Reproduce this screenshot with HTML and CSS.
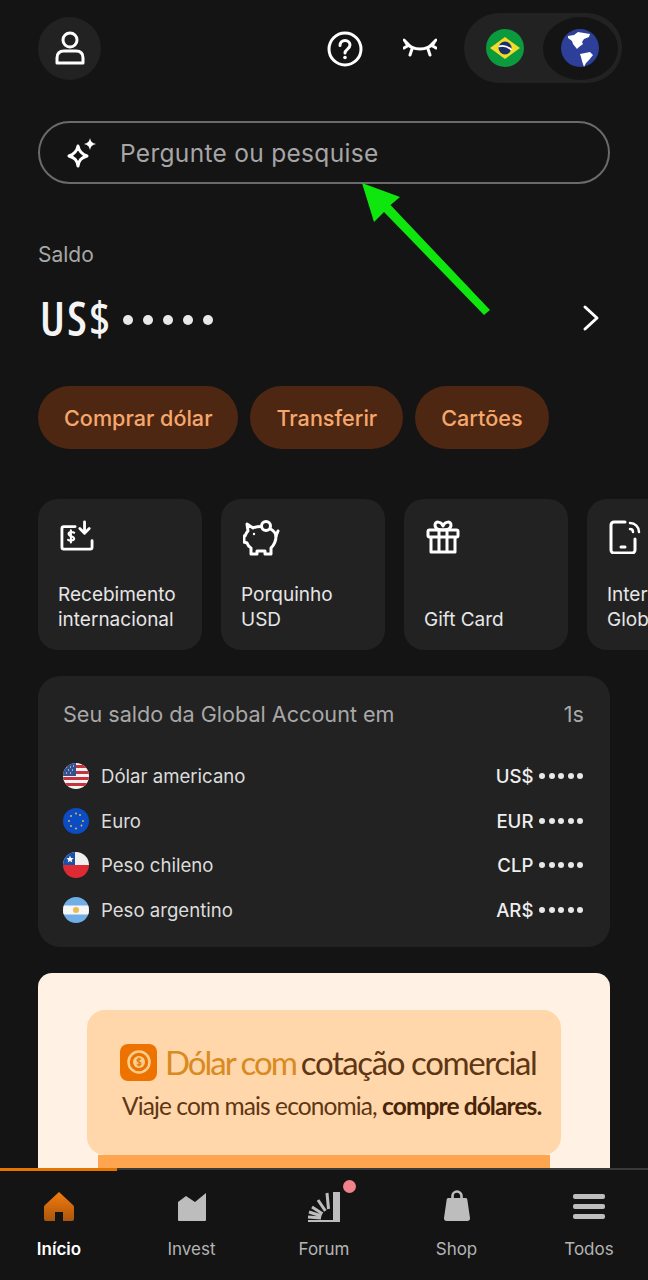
FILE: index.html
```html
<!DOCTYPE html>
<html lang="pt-BR">
<head>
    <meta charset="UTF-8">
    <meta name="viewport" content="width=device-width, initial-scale=1.0">
    <title>Início</title>
    <link rel="stylesheet" href="styles.css">
</head>
<body>
<div class="app">
    <header class="topbar">
        <div class="avatar">
            <svg width="32" height="34" viewBox="0 0 32 34" fill="none" stroke="#fff" stroke-width="3">
                <circle cx="16" cy="9" r="7"/>
                <path d="M3 32v-5c0-5 3-7 7-7h12c4 0 7 2 7 7v5z" stroke-linejoin="round"/>
            </svg>
        </div>
        <div class="topbar-right">
            <svg class="help" width="36" height="36" viewBox="0 0 36 36" fill="none" stroke="#fff">
                <circle cx="18" cy="18" r="16" stroke-width="3"/>
                <path d="M13 14.500c0-3 2.200-5 5-5s5 2 5 4.600c0 4-5 4-5 8" stroke-width="3" stroke-linecap="round"/>
                <circle cx="18" cy="26.500" r="1.800" fill="#fff" stroke="none"/>
            </svg>
            <svg class="eye" width="34" height="20" viewBox="0 0 34 20" fill="none" stroke="#fff" stroke-width="3" stroke-linecap="round">
                <path d="M3 5c7 8 21 8 28 0"/>
                <path d="M1 2l4 4M33 2l-4 4M9 11l-2 6M25 11l2 6M1 10l5-3M33 10l-5-3"/>
            </svg>
            <div class="region-toggle">
                <div class="region">
                    <svg width="38" height="38" viewBox="0 0 38 38">
                        <circle cx="19" cy="19" r="19" fill="#0b9a3e"/>
                        <path d="M19 8l15 11-15 11L4 19z" fill="#f2dc26"/>
                        <circle cx="19" cy="19" r="6.500" fill="#1b2f6b"/>
                        <path d="M12.500 17.500c5-1.500 10 .5 13 3.500" stroke="#fff" stroke-width="1.800" fill="none"/>
                    </svg>
                </div>
                <div class="region region-on">
                    <svg width="38" height="38" viewBox="0 0 38 38">
                        <circle cx="19" cy="19" r="19" fill="#2d3f99"/>
                        <path d="M7 7l6-1 4-3 6 1 6 1-1 3-5 2-2 3 1 2-4 3-2 2-4-5-1-3-4-3z" fill="#fff"/>
                        <path d="M19 25l5-1 5-1 3 3-4 5-3 3-2 4-2-6-1-4z" fill="#fff"/>
                    </svg>
                </div>
            </div>
        </div>
    </header>

    <div class="search">
        <svg width="34" height="34" viewBox="0 0 34 34" fill="none">
            <path d="M13 10c1 5 3 8 9 10-6 2-8 4-9 10-1-6-3-8-9-10 6-2 8-5 9-10z" stroke="#fff" stroke-width="3" stroke-linejoin="round"/>
            <path d="M25 2c.8 3.500 2 5 6 6-4 1-5.200 2.500-6 6-.8-3.500-2-5-6-6 4-1 5.200-2.500 6-6z" fill="#fff"/>
        </svg>
        <span>Pergunte ou pesquise</span>
    </div>

    <section class="balance">
        <div class="balance-label">Saldo</div>
        <div class="balance-row">
            <span class="balance-cur">US$</span>
            <span class="dots dots-lg"><i></i><i></i><i></i><i></i><i></i></span>
            <svg class="chevron" width="18" height="28" viewBox="0 0 18 28" fill="none" stroke="#fff" stroke-width="3" stroke-linecap="round" stroke-linejoin="round">
                <path d="M3 3l12 11L3 25"/>
            </svg>
        </div>
    </section>

    <div class="actions">
        <button class="pill">Comprar dólar</button>
        <button class="pill">Transferir</button>
        <button class="pill">Cartões</button>
    </div>

    <div class="shortcuts">
        <div class="shortcut">
            <svg width="34" height="32" viewBox="0 0 36 34" fill="none" stroke="#fff" stroke-width="3" stroke-linecap="round" stroke-linejoin="round">
                <path d="M16 7H4a2 2 0 0 0-2 2v20a2 2 0 0 0 2 2h28a2 2 0 0 0 2-2v-7"/>
                <path d="M26 2v11M21 9l5 5 5-5"/>
                <path d="M15 13.500c-1-1-5.500-1.500-6 1 0 3.500 6 2 6 5.500-.5 2.500-5 2-6.500 1M11.500 11v13" stroke-width="2.200"/>
            </svg>
            <p>Recebimento<br>internacional</p>
        </div>
        <div class="shortcut">
            <svg width="37" height="37" viewBox="0 0 37 37" fill="none" stroke="#fff" stroke-width="3" stroke-linecap="round" stroke-linejoin="round">
                <circle cx="23" cy="6" r="4.500"/>
                <path d="M18 6.500c-4 0-6 .5-8 1.500L4 4l1 7c-2 2-2 3-3 5H1v6l3 1c1 3 2 4 4 5v6h6v-3h8v3h6v-6c3-3 5-7 5-12l2-5"/>
                <path d="M27.500 9c3 1.500 5 4 5.500 7"/>
                <circle cx="11" cy="14" r="1.200" fill="#fff" stroke="none"/>
            </svg>
            <p>Porquinho<br>USD</p>
        </div>
        <div class="shortcut">
            <svg width="34" height="34" viewBox="0 0 34 34" fill="none" stroke="#fff" stroke-width="3" stroke-linejoin="round">
                <rect x="2" y="10" width="30" height="7" rx="1.500"/>
                <path d="M5 17v15h24V17M13 10v22M21 10v22"/>
                <path d="M17 10c-3 0-8-1-8-5 0-4 6-4 8 1 2-5 8-5 8-1 0 4-5 5-8 5z"/>
            </svg>
            <p class="bottom">Gift Card</p>
        </div>
        <div class="shortcut">
            <svg width="34" height="34" viewBox="0 0 34 34" fill="none" stroke="#fff" stroke-width="3" stroke-linecap="round" stroke-linejoin="round">
                <path d="M16 2H5a3 3 0 0 0-3 3v25a3 3 0 0 0 3 3h18a3 3 0 0 0 3-3V19"/>
                <path d="M12 27h4"/>
                <path d="M21 3c5 0 9 4 9 9M21 9c2 0 3 1 3 3" stroke-width="2.500"/>
            </svg>
            <p>Internet<br>Global</p>
        </div>
    </div>

    <section class="account">
        <div class="account-head">
            <span>Seu saldo da Global Account em</span>
            <span>1s</span>
        </div>
        <div class="account-row">
            <svg class="flag" viewBox="0 0 26 26">
                <rect width="26" height="26" fill="#f4f4f4"/>
                <path d="M0 2h26v3H0zM0 8h26v3H0zM0 14h26v3H0zM0 20h26v3H0z" fill="#c8323c"/>
                <rect width="13" height="13" fill="#34528f"/>
                <path d="M3 4h1M7 4h1M10 3h1M5 7h1M9 7h1M3 10h1M7 10h1" stroke="#fff" stroke-width="1.200"/>
            </svg>
            <span class="cur-name">Dólar americano</span>
            <span class="cur-val">US$ <span class="dots"><i></i><i></i><i></i><i></i><i></i></span></span>
        </div>
        <div class="account-row">
            <svg class="flag" viewBox="0 0 26 26">
                <rect width="26" height="26" fill="#0b4cc4"/>
                <g fill="#e8c93a">
                    <circle cx="13" cy="5.500" r=".9"/><circle cx="17" cy="7" r=".9"/><circle cx="20" cy="13" r=".9"/><circle cx="18.500" cy="17.500" r=".9"/>
                    <circle cx="13" cy="20.500" r=".9"/><circle cx="8" cy="18" r=".9"/><circle cx="6" cy="13" r=".9"/><circle cx="8" cy="8" r=".9"/>
                </g>
            </svg>
            <span class="cur-name">Euro</span>
            <span class="cur-val">EUR <span class="dots"><i></i><i></i><i></i><i></i><i></i></span></span>
        </div>
        <div class="account-row">
            <svg class="flag" viewBox="0 0 26 26">
                <rect width="26" height="13" fill="#f0f0f0"/>
                <rect y="13" width="26" height="13" fill="#de2a32"/>
                <rect width="12" height="13" fill="#1b4fa8"/>
                <path d="M7 3.500l1 2.600 2.700.1-2.100 1.700.7 2.600L7 9.100l-2.300 1.400.7-2.600-2.100-1.700L6 6.100z" fill="#fff"/>
            </svg>
            <span class="cur-name">Peso chileno</span>
            <span class="cur-val">CLP <span class="dots"><i></i><i></i><i></i><i></i><i></i></span></span>
        </div>
        <div class="account-row">
            <svg class="flag" viewBox="0 0 26 26">
                <rect width="26" height="26" fill="#6faee6"/>
                <rect y="8.500" width="26" height="9" fill="#f6f6f6"/>
                <circle cx="13" cy="13" r="3" fill="#e8bb55"/>
            </svg>
            <span class="cur-name">Peso argentino</span>
            <span class="cur-val">AR$ <span class="dots"><i></i><i></i><i></i><i></i><i></i></span></span>
        </div>
    </section>

    <section class="banner">
        <div class="banner-box">
            <div class="banner-title">
                <span class="banner-logo">
                    <svg width="26" height="26" viewBox="0 0 26 26" fill="none">
                        <circle cx="13" cy="13" r="10.500" stroke="#f8cf8e" stroke-width="2.500"/>
                        <circle cx="13" cy="13" r="6" fill="#f8cf8e"/>
                        <path d="M15 10.500c-1-1-4-1-4 .8 0 2 4 1.200 4 3.400 0 1.800-3 1.800-4.200.8M13 8.500v9" stroke="#e87400" stroke-width="1.200"/>
                    </svg>
                </span>
                <span class="t-orange">Dólar com</span>
                <span class="t-brown">cotação comercial</span>
            </div>
            <div class="banner-sub">Viaje com mais economia, <b>compre dólares.</b></div>
        </div>
        <div class="banner-strip"></div>
    </section>

    <nav class="tabbar">
        <div class="tab-progress"></div>
        <div class="tab tab-on">
            <svg width="32" height="32" viewBox="0 0 32 32">
                <defs>
                    <linearGradient id="homeFill" x1="0" y1="0" x2="0" y2="1">
                        <stop offset="0" stop-color="#f57c0c"/>
                        <stop offset="1" stop-color="#a9560f"/>
                    </linearGradient>
                </defs>
                <path d="M16 2L30 15c.6.6 1 1.200 1 2v12a2 2 0 0 1-2 2h-9v-9h-8v9H3a2 2 0 0 1-2-2V17c0-.8.4-1.400 1-2z" fill="url(#homeFill)"/>
            </svg>
            <span>Início</span>
        </div>
        <div class="tab">
            <svg width="32" height="32" viewBox="0 0 32 32">
                <path d="M2 12l8-6 9 6 11-9v27a1 1 0 0 1-1 1H3a1 1 0 0 1-1-1z" fill="#bdbdbd"/>
            </svg>
            <span>Invest</span>
        </div>
        <div class="tab">
            <div class="forum-icon">
                <svg width="34" height="32" viewBox="0 0 34 32" fill="none" stroke="#bdbdbd" stroke-width="3">
                    <path d="M26 2h7v30H1v-2h25z" fill="#bdbdbd" stroke="none"/>
                    <path d="M21.500 19L20 3M18.400 20.800L11 10M15.500 23.700L5 17M14.500 26L2 22M14 28L1 27"/>
                </svg>
                <i class="badge"></i>
            </div>
            <span>Forum</span>
        </div>
        <div class="tab">
            <svg width="32" height="32" viewBox="0 0 32 32">
                <path d="M11.500 9V6a4.500 4.500 0 0 1 9 0v3" fill="none" stroke="#bdbdbd" stroke-width="2.600"/>
                <path d="M7.500 8h17c1 0 1.700.6 1.800 1.500L29 28a2.500 2.500 0 0 1-2.500 3h-21A2.500 2.500 0 0 1 3 28L5.700 9.500C5.800 8.600 6.500 8 7.500 8z" fill="#bdbdbd"/>
            </svg>
            <span>Shop</span>
        </div>
        <div class="tab">
            <svg width="34" height="32" viewBox="0 0 34 32" fill="#bdbdbd">
                <rect x="1" y="4" width="32" height="5" rx="2"/>
                <rect x="1" y="14" width="32" height="5" rx="2"/>
                <rect x="1" y="24" width="32" height="5" rx="2"/>
            </svg>
            <span>Todos</span>
        </div>
    </nav>

    <!-- green arrow marked on the screenshot -->
    <svg class="mark-arrow" width="648" height="340" viewBox="0 0 648 340">
        <path d="M362 183L400 197 390.500 205 490 310 484 315 384 212 374 222z" fill="#0ee60e"/>
    </svg>
</div>
</body>
</html>
```

FILE: styles.css
```css
* {
    box-sizing: border-box;
}
body {
    margin: 0;
    background: #141414;
    font-family: Inter, "Noto Sans", sans-serif;
    color: #fff;
}
.app {
    position: relative;
    width: 648px;
    height: 1280px;
    overflow: hidden;
    background: #141414;
}
.topbar {
    display: flex;
    justify-content: space-between;
    align-items: center;
    height: 70px;
    margin: 13px 26px 0 38px;
}
.avatar {
    display: flex;
    align-items: center;
    justify-content: center;
    width: 63px;
    height: 63px;
    border-radius: 50%;
    background: #222;
}
.topbar-right {
    display: flex;
    align-items: center;
}
.help {
    margin-top: 2px;
    margin-right: 40px;
}
.eye {
    margin-right: 27px;
}
.region-toggle {
    display: flex;
    align-items: center;
    justify-content: space-between;
    width: 158px;
    height: 70px;
    padding: 0 4px 0 3px;
    border-radius: 35px;
    background: #222;
}
.region {
    display: flex;
    align-items: center;
    justify-content: center;
    width: 76px;
    height: 63px;
}
.region-on {
    border-radius: 50%;
    background: #141414;
}
.search {
    display: flex;
    align-items: center;
    gap: 21px;
    height: 63px;
    margin: 38px 38px 0;
    padding-left: 25px;
    border: 2px solid #6a6a6a;
    border-radius: 32px;
    font-size: 24.500px;
    letter-spacing: 0.3px;
    color: #a6a6a6;
}
.balance {
    margin: 58px 38px 0;
}
.balance-label {
    font-size: 21px;
    line-height: 26px;
    color: #a8a8a8;
}
.balance-row {
    display: flex;
    align-items: center;
    height: 50px;
    margin-top: 25px;
}
.balance-cur {
    margin-left: 2px;
    font-family: "Open Sans", sans-serif;
    font-stretch: 85%;
    font-size: 46px;
    font-weight: 600;
    letter-spacing: 2.500px;
    color: #f4f4f4;
}
.chevron {
    margin-left: auto;
    margin-right: 10px;
}
.dots {
    display: inline-flex;
    gap: 3.400px;
    align-items: center;
}
.dots i {
    width: 6px;
    height: 6px;
    border-radius: 50%;
    background: #e8e8e8;
}
.dots-lg {
    gap: 10px;
    margin-top: 4px;
    margin-left: 11px;
}
.dots-lg i {
    width: 10px;
    height: 10px;
}
.actions {
    display: flex;
    gap: 12px;
    margin: 43px 38px 0;
}
.pill {
    height: 63px;
    padding: 0 26px;
    border: none;
    border-radius: 32px;
    background: #4d2712;
    font-family: Inter, sans-serif;
    font-size: 21.600px;
    font-weight: 500;
    color: #f7a76c;
}
.shortcuts {
    display: flex;
    gap: 19px;
    margin: 50px 0 0 38px;
}
.shortcut {
    position: relative;
    flex: none;
    width: 164px;
    height: 151px;
    padding: 21px 20px;
    border-radius: 20px;
    background: #222;
}
.shortcut svg {
    display: block;
    margin-left: 2px;
}
.shortcut p {
    position: absolute;
    left: 20px;
    top: 83px;
    margin: 0;
    font-size: 19px;
    line-height: 25px;
    color: #e6e6e6;
}
.shortcut p.bottom {
    top: 108px;
}
.account {
    height: 271px;
    margin: 26px 38px 0;
    padding: 25px 26px 0 25px;
    border-radius: 22px;
    background: #222;
}
.account-head {
    display: flex;
    justify-content: space-between;
    margin-bottom: 27px;
    font-size: 21.600px;
    line-height: 26px;
    color: #a8a8a8;
}
.account-row {
    display: flex;
    align-items: center;
    height: 44.600px;
    font-size: 18.600px;
    color: #dcdcdc;
}
.flag {
    flex: none;
    width: 26px;
    height: 26px;
    margin-right: 12px;
    border-radius: 50%;
}
.cur-val {
    display: flex;
    align-items: center;
    gap: 6px;
    margin-left: auto;
    margin-right: 1px;
    font-weight: 500;
    color: #eee;
}
.banner {
    height: 240px;
    margin: 26px 38px 0;
    padding-top: 37px;
    border-radius: 14px 14px 0 0;
    background: #fff1e3;
}
.banner-box {
    width: 474px;
    height: 145px;
    margin-left: 49px;
    padding-top: 33px;
    border-radius: 18px;
    background: #ffd7aa;
    font-family: Lato, sans-serif;
}
.banner-title {
    display: flex;
    align-items: center;
    padding-left: 33px;
    font-size: 33px;
    line-height: 38px;
    letter-spacing: -1.400px;
}
.banner-logo {
    display: flex;
    align-items: center;
    justify-content: center;
    width: 37px;
    height: 37px;
    margin-right: 8px;
    border-radius: 8px;
    background: #ee7200;
}
.t-orange {
    margin-right: 5px;
    letter-spacing: -2px;
    color: #d98a20;
}
.t-brown {
    color: #5e3614;
}
.banner-sub {
    margin-top: 10px;
    padding-left: 35px;
    font-size: 24.500px;
    letter-spacing: -0.9px;
    white-space: nowrap;
    color: #5e3614;
}
.banner-sub b {
    font-weight: 700;
    color: #472408;
}
.banner-strip {
    width: 452px;
    height: 40px;
    margin-left: 60px;
    background: #ffa54f;
}
.tabbar {
    position: absolute;
    left: 0;
    right: 0;
    bottom: 0;
    display: flex;
    justify-content: space-between;
    height: 112px;
    padding-top: 20px;
    border-top: 2px solid #3a3a3a;
    background: #141414;
}
.tab-progress {
    position: absolute;
    left: 0;
    top: -2px;
    width: 117px;
    height: 3px;
    background: #e87400;
}
.tab {
    display: flex;
    flex-direction: column;
    align-items: center;
    width: 118px;
    font-size: 17px;
    color: #b4b4b4;
}
.tab > span {
    margin-top: 17px;
}
.tab-on {
    font-weight: 600;
    color: #fff;
}
.forum-icon {
    position: relative;
    height: 32px;
}
.badge {
    position: absolute;
    right: -15px;
    top: -10px;
    width: 13px;
    height: 13px;
    border-radius: 50%;
    background: #f0828a;
}
.mark-arrow {
    position: absolute;
    left: 0;
    top: 0;
    pointer-events: none;
}
```
